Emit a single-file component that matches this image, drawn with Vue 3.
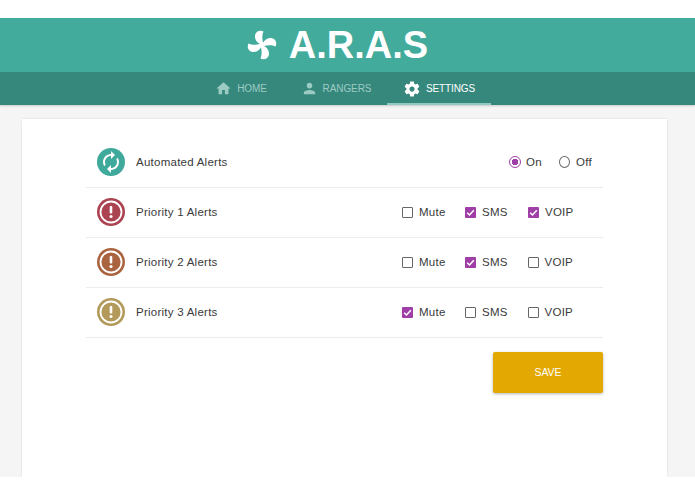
<script setup>
const rows = [
  { name: 'Priority 1 Alerts', color: '#ab4351', opts: [['Mute', false], ['SMS', true], ['VOIP', true]] },
  { name: 'Priority 2 Alerts', color: '#ab6440', opts: [['Mute', false], ['SMS', true], ['VOIP', false]] },
  { name: 'Priority 3 Alerts', color: '#b39a5a', opts: [['Mute', true], ['SMS', false], ['VOIP', false]] },
]
const blades = [0, 90, 180, 270]
</script>

<template>
  <div class="page">
    <header class="head">
      <svg class="fan" viewBox="0 0 30 30" width="30" height="30">
        <path
          v-for="a in blades"
          :key="a"
          fill="#fff"
          :transform="`rotate(${a} 15 15)`"
          d="M14.800 15 C11 13.500 8 10.500 8 6.500 C8 3.200 10.300 1 13 .8 C14.500 .7 15.600 1 16.500 1.600 C14.800 5 15 10 16.500 14 Z"
        />
        <circle cx="15" cy="15" r="2.200" fill="#fff" />
      </svg>
      <span class="brand">A.R.A.S</span>
    </header>
    <nav class="nav">
      <a class="tab">
        <svg viewBox="0 0 24 24" width="17" height="17"><path fill="currentColor" d="M10 20v-6h4v6h5v-8h3L12 3 2 12h3v8z" /></svg>
        HOME
      </a>
      <a class="tab">
        <svg viewBox="0 0 24 24" width="17" height="17"><path fill="currentColor" d="M12 12c2.210 0 4-1.790 4-4s-1.790-4-4-4-4 1.790-4 4 1.790 4 4 4zm0 2c-2.670 0-8 1.340-8 4v2h16v-2c0-2.660-5.330-4-8-4z" /></svg>
        RANGERS
      </a>
      <a class="tab active">
        <svg viewBox="0 0 24 24" width="18" height="18"><path fill="currentColor" d="M19.430 12.980c.04-.32.07-.64.07-.98s-.03-.66-.07-.98l2.110-1.650c.19-.15.24-.42.12-.64l-2-3.460c-.12-.22-.39-.3-.61-.22l-2.490 1c-.52-.4-1.080-.73-1.690-.98l-.38-2.650C14.460 2.180 14.250 2 14 2h-4c-.25 0-.46.18-.49.42l-.38 2.650c-.61.25-1.170.59-1.690.98l-2.490-1c-.23-.09-.49 0-.61.22l-2 3.460c-.13.22-.07.49.12.64l2.110 1.650c-.04.32-.07.65-.07.98s.03.66.07.98l-2.110 1.650c-.19.15-.24.42-.12.64l2 3.460c.12.22.39.3.61.22l2.490-1c.52.4 1.080.73 1.690.98l.38 2.650c.03.24.24.42.49.42h4c.25 0 .46-.18.49-.42l.38-2.650c.61-.25 1.170-.59 1.690-.98l2.490 1c.23.09.49 0 .61-.22l2-3.460c.12-.22.07-.49-.12-.64l-2.110-1.650zM12 15.500c-1.930 0-3.500-1.570-3.500-3.500s1.570-3.500 3.500-3.500 3.500 1.570 3.500 3.500-1.570 3.500-3.500 3.500z" /></svg>
        SETTINGS
      </a>
    </nav>
    <main class="body">
      <section class="card">
        <div class="row">
          <svg class="ico" viewBox="0 0 28 28" width="28" height="28">
            <circle cx="14" cy="14" r="14" fill="#3fa99b" />
            <path transform="translate(26 2) scale(-1 1)" fill="#fff" d="M12 4V1L8 5l4 4V6c3.310 0 6 2.690 6 6 0 1.010-.25 1.970-.7 2.800l1.460 1.460C19.540 15.030 20 13.570 20 12c0-4.420-3.580-8-8-8zm0 14c-3.310 0-6-2.690-6-6 0-1.010.25-1.970.7-2.800L5.240 7.740C4.460 8.970 4 10.430 4 12c0 4.420 3.580 8 8 8v3l4-4-4-4v3z" />
          </svg>
          <span class="label">Automated Alerts</span>
          <div class="radios">
            <span class="opt"><i class="radio on"></i>On</span>
            <span class="opt"><i class="radio"></i>Off</span>
          </div>
        </div>
        <div v-for="r in rows" :key="r.name" class="row">
          <svg class="ico" viewBox="0 0 28 28" width="28" height="28">
            <circle cx="14" cy="14" r="14" :fill="r.color" />
            <circle cx="14" cy="14" r="10.500" fill="none" stroke="#fff" stroke-width="1.800" />
            <rect x="12.700" y="8" width="2.600" height="7.500" rx="1" fill="#fff" />
            <circle cx="14" cy="18.500" r="1.600" fill="#fff" />
          </svg>
          <span class="label">{{ r.name }}</span>
          <div class="checks">
            <span v-for="o in r.opts" :key="o[0]" class="check-opt">
              <i class="box" :class="{ on: o[1] }">
                <svg v-if="o[1]" viewBox="0 0 11 11" width="11" height="11"><path d="M2.200 5.700 L4.500 8 L8.800 3.200" fill="none" stroke="#fff" stroke-width="1.500" /></svg>
              </i>{{ o[0] }}
            </span>
          </div>
        </div>
        <div class="actions">
          <button class="save">SAVE</button>
        </div>
      </section>
    </main>
    <div class="foot"></div>
  </div>
</template>

<style scoped>
.page {
  width: 695px;
  height: 494px;
  padding-top: 18px;
  box-sizing: border-box;
  background: #fff;
  display: flex;
  flex-direction: column;
  overflow: hidden;
  font-family: "Liberation Sans", Arial, sans-serif;
}
.head {
  height: 54px;
  flex: none;
  background: #42ab9c;
  display: flex;
  align-items: center;
  justify-content: center;
  gap: 12px;
  color: #fff;
  padding-right: 20px;
  padding-bottom: 1px;
  box-sizing: border-box;
}
.fan { flex: none; }
.brand {
  font-size: 38px;
  font-weight: 700;
  line-height: 1;
}
.nav {
  height: 33px;
  flex: none;
  background: #36887c;
  display: flex;
  justify-content: center;
  padding-right: 8px;
  box-sizing: border-box;
  box-shadow: 0 1px 2px rgba(0, 0, 0, .18);
  position: relative;
  color: #9ccbc4;
  font-size: 10px;
  letter-spacing: -.1px;
}
.tab {
  display: flex;
  align-items: center;
  justify-content: center;
  gap: 5px;
  height: 33px;
  box-sizing: border-box;
  width: 86px;
}
.tab:first-child { padding-left: 4px; }
.tab:nth-child(2) { width: 106px; margin-right: -1px; padding-left: 2px; }
.tab.active {
  width: 104px;
  color: #fff;
  border-bottom: 2px solid #8fc9c0;
  padding-top: 2px;
}
.body {
  flex: 1;
  background: #f5f5f5;
  padding: 14px 28px 0 22px;
  min-height: 0;
  display: flex;
}
.card {
  flex: 1;
  background: #fff;
  padding: 19px 64px 0;
  box-shadow: 0 0 2px rgba(0, 0, 0, .12);
  box-sizing: border-box;
}
.row {
  height: 50px;
  display: flex;
  align-items: center;
  border-bottom: 1px solid #ececec;
  box-sizing: border-box;
  padding: 0 11px 1px;
  color: #3a3a3a;
  font-size: 11.500px;
  letter-spacing: .25px;
}
.ico { flex: none; margin-right: 11px; }
.label { flex: 1; }
.radios { display: flex; }
.opt {
  display: flex;
  align-items: center;
  gap: 5px;
  width: 50px;
}
.opt:last-child { width: 33px; gap: 6px; }
.radio {
  width: 12px;
  height: 12px;
  box-sizing: border-box;
  border: 1.200px solid #666;
  border-radius: 50%;
}
.radio.on {
  border-color: #a03ea8;
  background: radial-gradient(circle, #a03ea8 0 3px, transparent 3.300px);
}
.checks { display: flex; padding-right: 19px; }
.check-opt {
  display: flex;
  align-items: center;
  gap: 6px;
  width: 63px;
}
.check-opt:last-child { width: 45px; }
.box {
  width: 11px;
  height: 11px;
  box-sizing: border-box;
  border: 1.300px solid #666;
  border-radius: 1px;
  display: flex;
  align-items: center;
  justify-content: center;
}
.box.on {
  border: 0;
  background: #a03ea8;
}
.actions {
  display: flex;
  justify-content: flex-end;
  padding-top: 14px;
}
.save {
  width: 110px;
  height: 41px;
  padding: 0 0 2px;
  border: 0;
  border-radius: 2px;
  background: #e3a902;
  color: #fff;
  font-family: inherit;
  font-size: 10.500px;
  box-shadow: 0 1px 3px rgba(0, 0, 0, .3);
}
.foot { height: 17px; flex: none; background: #fff; }
</style>
